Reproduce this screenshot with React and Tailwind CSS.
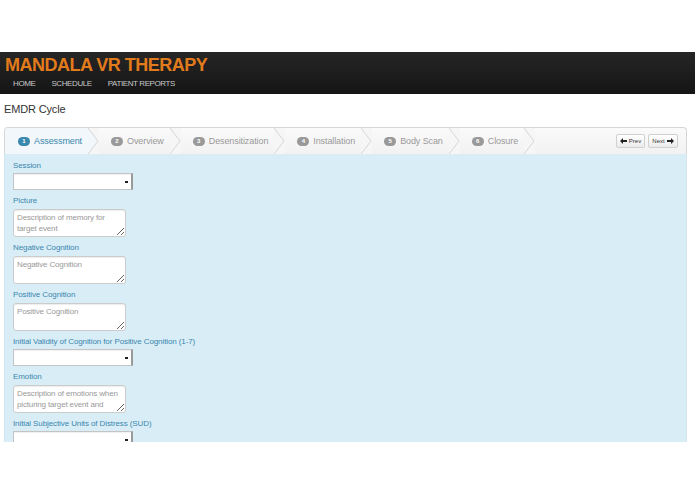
import React from 'react';

const steps = [
  { n: 1, label: 'Assessment', active: true },
  { n: 2, label: 'Overview' },
  { n: 3, label: 'Desensitization' },
  { n: 4, label: 'Installation' },
  { n: 5, label: 'Body Scan' },
  { n: 6, label: 'Closure' },
];

const fields = [
  { label: 'Session', type: 'select' },
  { label: 'Picture', type: 'text', placeholder: 'Description of memory for target event' },
  { label: 'Negative Cognition', type: 'text', placeholder: 'Negative Cognition' },
  { label: 'Positive Cognition', type: 'text', placeholder: 'Positive Cognition' },
  { label: 'Initial Validity of Cognition for Positive Cognition (1-7)', type: 'select' },
  {
    label: 'Emotion',
    type: 'text',
    placeholder: 'Description of emotions when picturing target event and negative cognition',
  },
  { label: 'Initial Subjective Units of Distress (SUD)', type: 'select' },
];

function Chevron({ active }) {
  return (
    <svg width="11" height="26" viewBox="0 0 11 26" className="shrink-0">
      <polygon points="0,0 10,13 0,26 11,26 11,0" fill="#f6f6f6" />
      <polygon points="0,0 10,13 0,26" fill={active ? '#f2f7fb' : '#f6f6f6'} />
      <polyline points="0,0 10,13 0,26" fill="none" stroke="#d6d6d6" strokeWidth="1" />
    </svg>
  );
}

function Arrow({ dir }) {
  return (
    <svg width="7" height="6" viewBox="0 0 7 6" className="shrink-0">
      {dir === 'left' ? (
        <path d="M0 3 L3 0 L3 2 L7 2 L7 4 L3 4 L3 6 Z" fill="#222" />
      ) : (
        <path d="M7 3 L4 0 L4 2 L0 2 L0 4 L4 4 L4 6 Z" fill="#222" />
      )}
    </svg>
  );
}

function FakeSelect() {
  return (
    <div className="flex h-[17px] w-[120px] items-center justify-end border border-[#c4c4c4] border-r-2 border-r-[#9a9a9a] bg-white pr-[3px] shadow-[inset_0_1px_1px_rgba(0,0,0,0.06)]">
      <span className="block h-[2px] w-[3px] bg-[#222]" />
    </div>
  );
}

export default function App() {
  return (
    <div className="min-h-[494px] w-[695px] bg-white" style={{ fontFamily: '"Liberation Sans", Arial, sans-serif' }}>
      <div className="h-[52px]" />

      {/* Header */}
      <div className="h-[42px] bg-gradient-to-b from-[#262626] to-[#151515] px-[5px] pt-[3px]">
        <div className="text-[18px] font-bold leading-[20px] tracking-[-0.5px] text-[#e27b1c]">MANDALA VR THERAPY</div>
        <div className="mt-[4px] flex gap-[16px] pl-[8px] text-[8px] leading-[10px] tracking-[-0.4px] text-[#c8c8c8]">
          <span>HOME</span>
          <span>SCHEDULE</span>
          <span>PATIENT REPORTS</span>
        </div>
      </div>

      <div className="mt-[8px] pl-[4px] text-[11px] leading-[14px] tracking-[-0.15px] text-[#333]">EMDR Cycle</div>

      {/* Wizard */}
      <div className="ml-[4px] mr-[8px] mt-[11px]">
        <div className="flex h-[27px] items-stretch overflow-hidden rounded-t-[4px] border border-b-0 border-[#d6d6d6] bg-gradient-to-b from-[#fafafa] to-[#f2f2f2]">
          {steps.map((s, i) => (
            <div key={s.n} className={`flex items-center ${s.active ? 'bg-[#f2f7fb]' : ''}`}>
              <div className={`flex items-center gap-[4px] pr-[6px] ${i === 0 ? 'pl-[13px]' : 'pl-[12px]'}`}>
                <span
                  className={`flex h-[9px] w-[12px] items-center justify-center rounded-full text-[6px] font-bold leading-none text-white ${
                    s.active ? 'bg-[#3a87ad]' : 'bg-[#999]'
                  }`}
                >
                  {s.n}
                </span>
                <span className={`text-[9px] leading-[12px] tracking-[-0.1px] ${s.active ? 'text-[#3a87ad]' : 'text-[#999]'}`}>
                  {s.label}
                </span>
              </div>
              <Chevron active={s.active} />
            </div>
          ))}
          <div className="ml-auto flex items-center gap-[3px] pr-[8px]">
            <button className="flex h-[14px] w-[29px] items-center justify-center gap-[2px] rounded-[2px] border border-[#d0d0d0] bg-gradient-to-b from-white to-[#ececec] text-[6px] leading-none text-[#333]">
              <Arrow dir="left" />
              <span>Prev</span>
            </button>
            <button className="flex h-[14px] w-[30px] items-center justify-center gap-[2px] rounded-[2px] border border-[#d0d0d0] bg-gradient-to-b from-white to-[#ececec] text-[6px] leading-none text-[#333]">
              <span>Next</span>
              <Arrow dir="right" />
            </button>
          </div>
        </div>

        <div className="h-[288px] overflow-hidden border-x border-[#d3e6ef] bg-[#d9edf7] pl-[8px] pt-[7px]">
          {fields.map((f) => (
            <div key={f.label} className="mb-[6px]">
              <div className="h-[10px] text-[8px] leading-[10px] tracking-[-0.1px] text-[#3a87ad]">{f.label}</div>
              {f.type === 'select' ? (
                <div className="mt-[2px]">
                  <FakeSelect />
                </div>
              ) : (
                <textarea
                  readOnly
                  placeholder={f.placeholder}
                  className="mt-[3px] block h-[28px] w-[113px] resize overflow-hidden rounded-[3px] border border-[#cccccc] bg-white px-[3px] pt-[2px] text-[8px] leading-[11px] tracking-[-0.15px] text-[#555] shadow-[inset_0_1px_1px_rgba(0,0,0,0.075)] placeholder:text-[#999]"
                />
              )}
            </div>
          ))}
        </div>
      </div>
    </div>
  );
}
